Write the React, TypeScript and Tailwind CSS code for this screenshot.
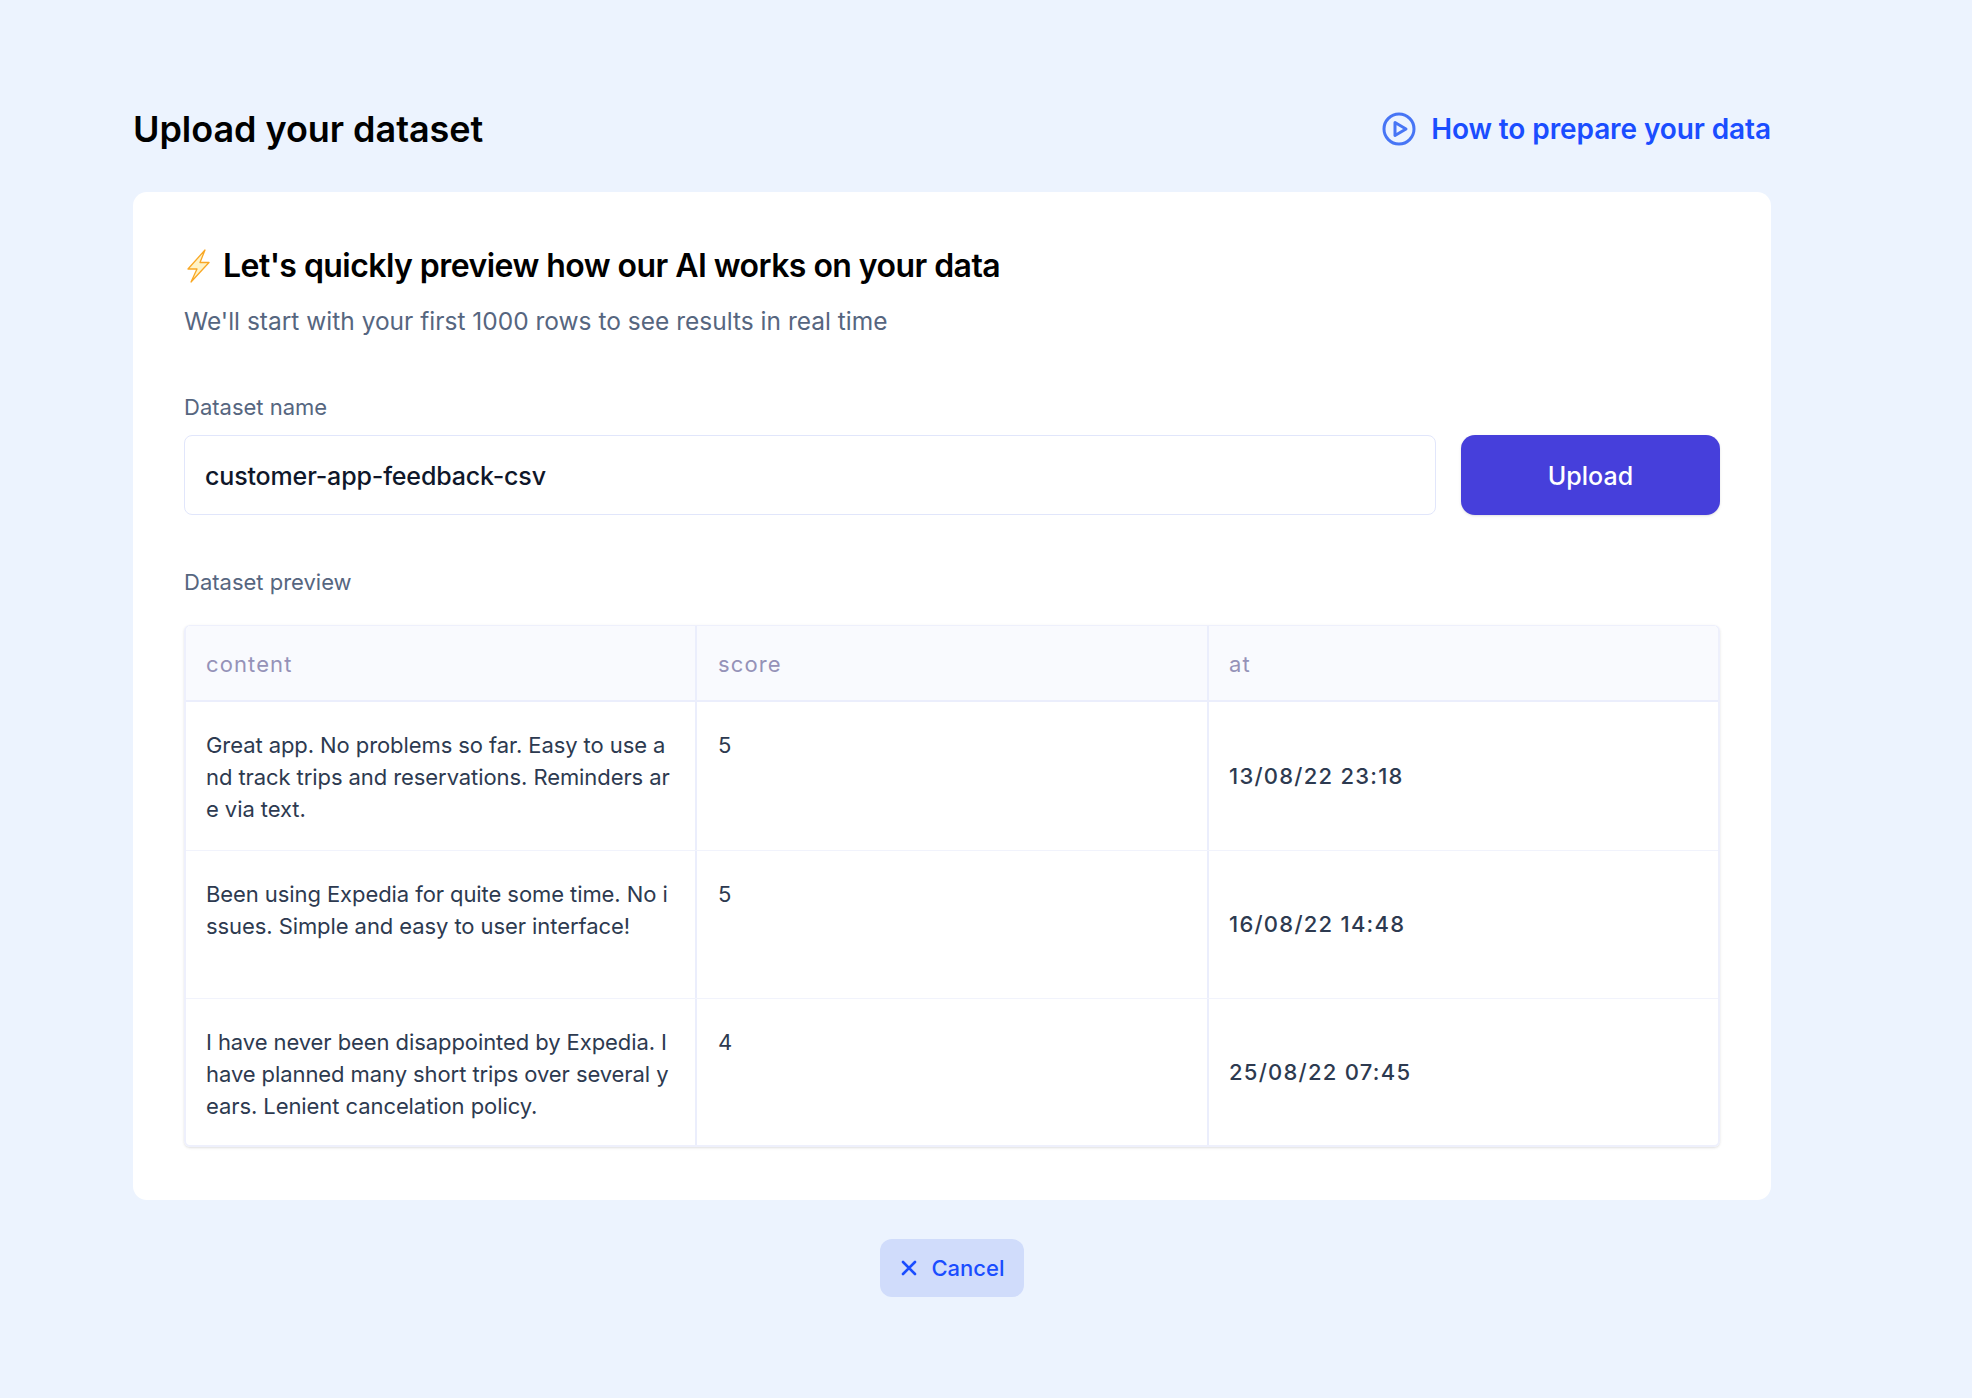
import React from 'react';

const rows = [
  { content: 'Great app. No problems so far. Easy to use and track trips and reservations. Reminders are via text.', score: '5', at: '13/08/22 23:18' },
  { content: 'Been using Expedia for quite some time. No issues. Simple and easy to user interface!', score: '5', at: '16/08/22 14:48' },
  { content: 'I have never been disappointed by Expedia. I have planned many short trips over several years. Lenient cancelation policy.', score: '4', at: '25/08/22 07:45' },
];

function Bolt() {
  return (
    <svg width="28" height="34" viewBox="0 0 28 34" fill="none">
      <path d="M21 1L4 20h9L7 33L25 13.500h-9L21 1z" fill="#fef3c7" stroke="#f9a825" strokeWidth="1.300" strokeLinejoin="round" />
    </svg>
  );
}

export default function App() {
  return (
    <div className="min-h-screen bg-[#ecf3fe] font-['Inter',sans-serif]">
      <div className="ml-[133px] w-[1638px] pt-[100px]">
        <div className="flex h-[58px] items-center justify-between">
          <h1 className="text-[36px] font-semibold tracking-[-0.05px] text-black">Upload your dataset</h1>
          <a className="flex items-center gap-[15px] text-[28px] font-semibold tracking-[-0.1px] text-[#1a4dff]">
            <svg width="34" height="34" viewBox="0 0 34 34" fill="none" stroke="#4775f5" strokeWidth="3">
              <circle cx="17" cy="17" r="15" />
              <path d="M13 10.500L24 17l-11 6.500z" strokeLinejoin="round" />
            </svg>
            How to prepare your data
          </a>
        </div>

        <div className="mt-[34px] h-[1008px] rounded-[14px] bg-white px-[51px] pt-[52px]">
          <div className="flex items-center gap-[11px] h-[44px]">
            <Bolt />
            <h2 className="text-[32px] font-semibold tracking-[-0.55px] text-black">Let's quickly preview how our AI works on your data</h2>
          </div>
          <p className="mt-[15px] text-[24.5px] leading-[36px] text-[#56667f]">We'll start with your first 1000 rows to see results in real time</p>

          <label className="mt-[52px] block text-[22px] leading-[32px] text-[#56667f]">Dataset name</label>
          <div className="mt-[12px] flex gap-[25px]">
            <div className="flex h-[80px] flex-1 items-center rounded-[8px] border border-[#e1e6fb] px-[20px] pt-[3px] text-[25px] font-medium tracking-[-0.15px] text-[#0f172a]">customer-app-feedback-csv</div>
            <button className="h-[80px] w-[259px] rounded-[14px] bg-[#463fdb] pt-[3px] text-[25px] font-medium text-white shadow-sm">Upload</button>
          </div>

          <label className="mt-[51px] block text-[22px] leading-[32px] text-[#56667f]">Dataset preview</label>
          <div className="mt-[27px] overflow-hidden rounded-[6px] border-x-2 border-y border-b-2 border-[#eef0fc] shadow-sm">
            <div className="grid h-[76px] grid-cols-[511px_512px_1fr] border-b-2 border-[#ebeefc] bg-[#f9fafe] text-[22px] tracking-[1.1px] text-[#9592b8]">
              <div className="flex items-center border-r-2 border-[#ebeefc] pl-[20px] pt-[2px]">content</div>
              <div className="flex items-center border-r-2 border-[#ebeefc] pl-[21px] pt-[2px]">score</div>
              <div className="flex items-center pl-[20px] pt-[2px]">at</div>
            </div>
            {rows.map((r, i) => (
              <div key={i} className="grid h-[148.5px] grid-cols-[511px_512px_1fr] border-b border-[#f1f3fc] text-[22px] leading-[32px] tracking-[-0.08px] text-[#2d3a50] last:h-[146px] last:border-b-0">
                <div className="border-r-2 border-[#ebeefc] px-[20px] pt-[27px] break-all">{r.content}</div>
                <div className="border-r-2 border-[#ebeefc] pl-[21px] pt-[27px]">{r.score}</div>
                <div className="flex items-center pl-[20px] font-medium tracking-[1.25px]">{r.at}</div>
              </div>
            ))}
          </div>
        </div>

        <div className="mt-[39px] flex justify-center">
          <button className="flex h-[58px] w-[144px] items-center justify-center gap-[14px] rounded-[12px] bg-[#d0dcfb] pl-[2px] text-[22px] font-medium text-[#1a4dff]">
            <svg width="16" height="16" viewBox="0 0 16 16" stroke="#1a4dff" strokeWidth="2.600" strokeLinecap="round">
              <path d="M2 2l12 12M14 2L2 14" />
            </svg>
            Cancel
          </button>
        </div>
      </div>
    </div>
  );
}
